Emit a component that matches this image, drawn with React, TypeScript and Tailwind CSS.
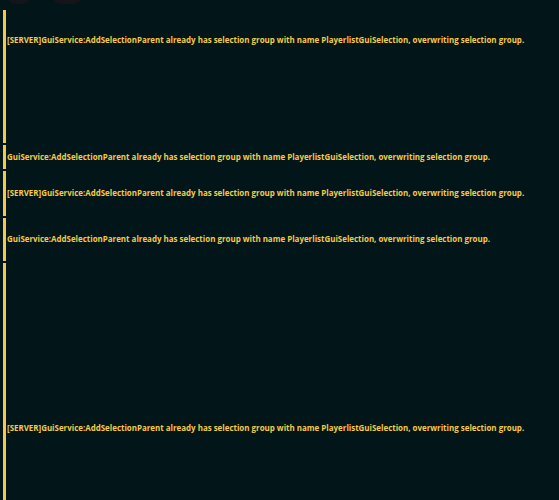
export default function App() {
  const server = "[SERVER]GuiService:AddSelectionParent already has selection group with name PlayerlistGuiSelection, overwriting selection group.";
  const client = "GuiService:AddSelectionParent already has selection group with name PlayerlistGuiSelection, overwriting selection group.";
  const rows = [
    { text: server, cls: "h-[133px] pt-[24px]" },
    { text: client, cls: "h-[24px] pt-[6px]" },
    { text: server, cls: "h-[45px] pt-[16px]" },
    { text: client, cls: "h-[43px] pt-[15px]" },
    { text: server, cls: "h-[240px] pt-[159px]" },
  ];
  return (
    <div className="relative w-[559px] h-[500px] overflow-hidden bg-[#02161a]">
      <div className="absolute left-[8px] top-[-10px] w-[22px] h-[14px] rounded-full bg-[#12151a]" />
      <div className="absolute left-[52px] top-[-14px] w-[30px] h-[18px] rounded-full bg-[#14141a]" />
      <div className="flex flex-col gap-[2px] pt-[10px] pl-[3px]">
        {rows.map((r, i) => (
          <div key={i} className={`border-l-[3px] border-[#f2c94c] pl-[1px] ${r.cls}`}>
            <div
              className="text-[7.95px] leading-[12px] font-bold text-[#f5cb45] whitespace-nowrap"
              style={{ fontFamily: '"Open Sans", "Noto Sans", sans-serif' }}
            >
              {r.text}
            </div>
          </div>
        ))}
      </div>
    </div>
  );
}
